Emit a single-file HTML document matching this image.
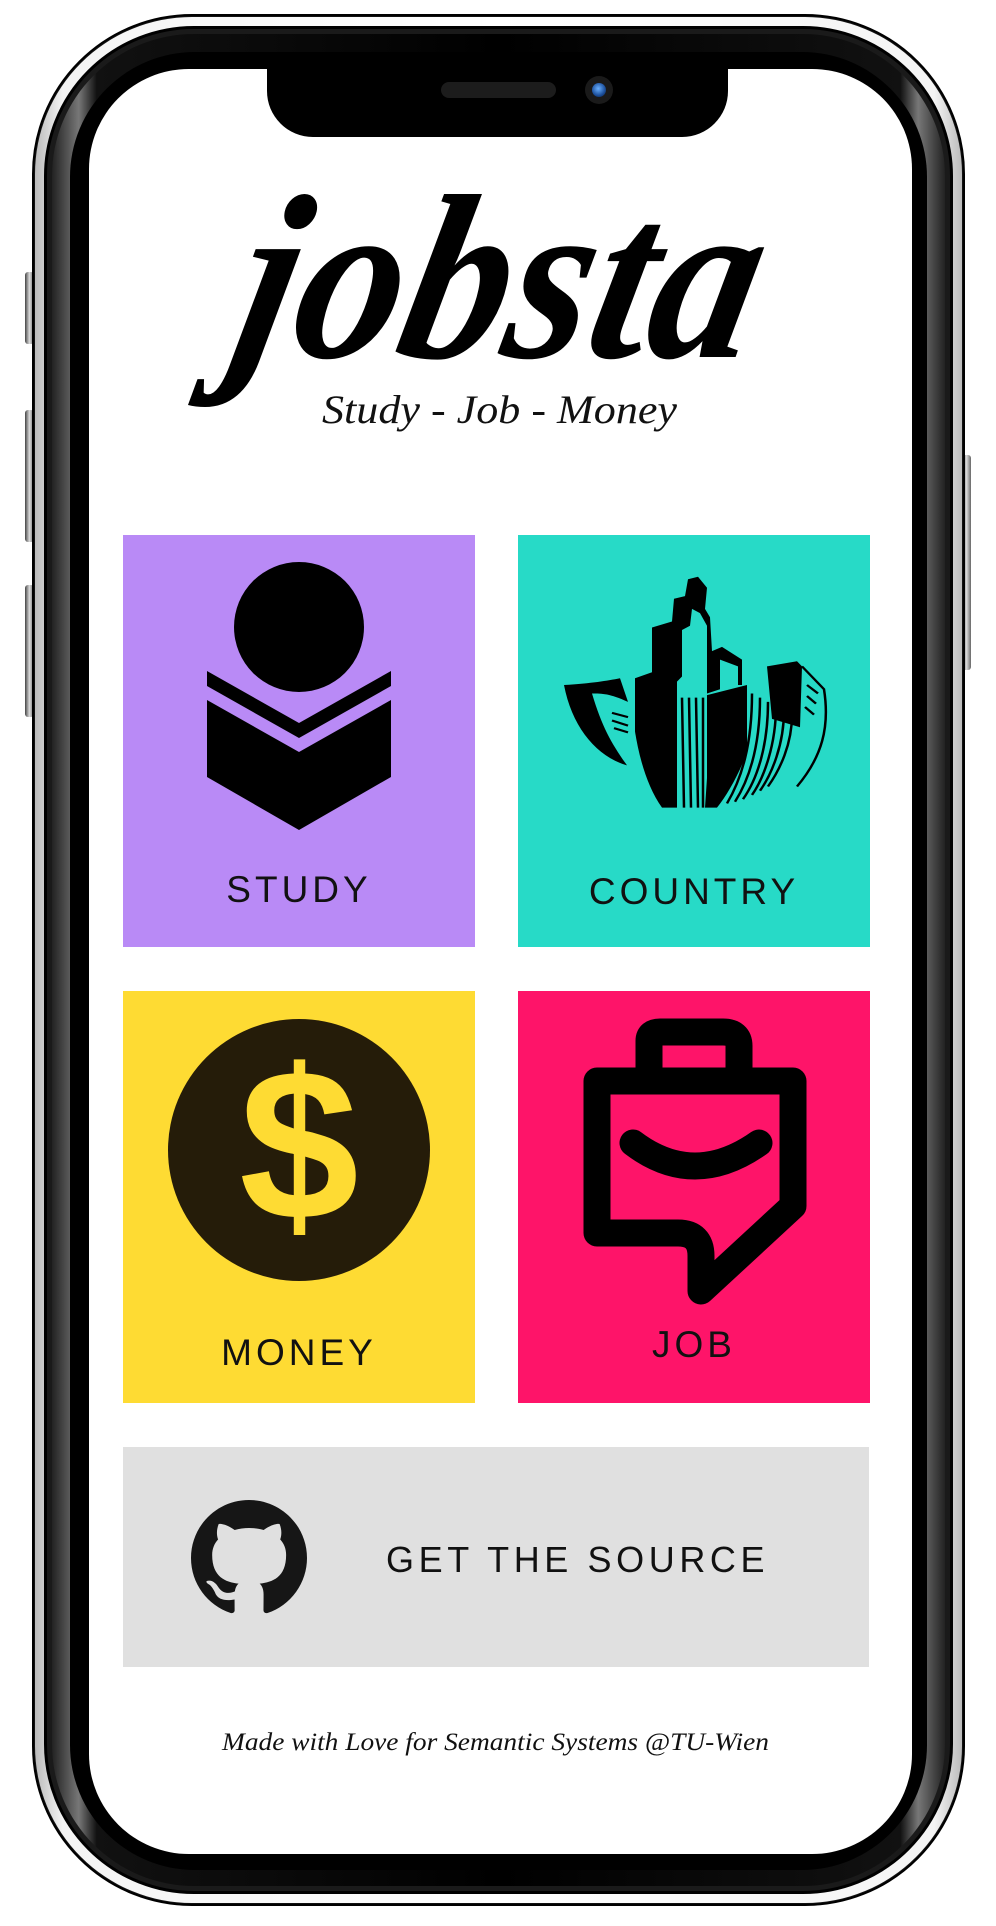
<!DOCTYPE html>
<html><head><meta charset="utf-8"><style>
*{margin:0;padding:0;box-sizing:border-box}
body{width:996px;height:1926px;background:#fff;position:relative;overflow:hidden;font-family:"Liberation Sans",sans-serif}
.abs{position:absolute}
.btn{position:absolute;background:linear-gradient(90deg,#444,#ddd,#666);border-radius:3px}
.card{position:absolute}
.lbl{position:absolute;left:0;right:0;text-align:center;font-size:37px;letter-spacing:4px;color:#111}
</style></head><body>
<div class="btn" style="left:25px;top:272px;width:9px;height:72px"></div>
<div class="btn" style="left:25px;top:410px;width:9px;height:132px"></div>
<div class="btn" style="left:25px;top:585px;width:9px;height:132px"></div>
<div class="btn" style="left:962px;top:455px;width:9px;height:215px"></div>
<div class="abs" style="left:32px;top:14px;width:933px;height:1892px;border-radius:160px;background:#111;border:2px solid #000"></div>
<div class="abs" style="left:35px;top:17px;width:927px;height:1886px;border-radius:157px;background:linear-gradient(90deg,#bbb,#f4f4f4 3%,#fff 50%,#f4f4f4 97%,#bbb)"></div>
<div class="abs" style="left:44px;top:26px;width:909px;height:1868px;border-radius:150px;background:#1a1a1a;border:3px solid #000"></div>
<div class="abs" style="left:52px;top:34px;width:893px;height:1852px;border-radius:142px;background:linear-gradient(90deg,#222,#777 3%,#111 5%,#000 50%,#111 95%,#777 97%,#222)"></div>
<div class="abs" style="left:70px;top:52px;width:857px;height:1818px;border-radius:125px;background:#000"></div>
<div class="abs" style="left:89px;top:69px;width:823px;height:1785px;border-radius:100px;background:#fff;overflow:hidden">
  <div class="abs" style="left:178px;top:-2px;width:461px;height:70px;background:#000;border-radius:0 0 46px 46px"></div>
</div>
<div class="abs" style="left:441px;top:82px;width:115px;height:16px;border-radius:8px;background:#1c1c1c"></div>
<div class="abs" style="left:585px;top:76px;width:28px;height:28px;border-radius:50%;background:#1a1a1a"></div>
<div class="abs" style="left:592px;top:83px;width:14px;height:14px;border-radius:50%;background:radial-gradient(circle at 45% 40%,#6ab0ff,#1b4e9a 60%,#0a1a33)"></div>

<svg class="abs" style="left:0;top:0" width="996" height="460">
  <g transform="translate(226,357) skewX(-12)">
  <text x="0" y="0" textLength="520" lengthAdjust="spacingAndGlyphs" font-family="Liberation Serif" font-style="italic" font-weight="bold" font-size="235" fill="#000">jobsta</text>
  </g>
  <text x="322" y="423" textLength="355" lengthAdjust="spacingAndGlyphs" font-family="Liberation Serif" font-style="italic" font-size="40" fill="#111">Study - Job - Money</text>
</svg>

<div class="card" style="left:123px;top:535px;width:352px;height:412px;background:#b98af6">
  <svg class="abs" style="left:0;top:0" width="352" height="412">
    <circle cx="176" cy="92" r="65" fill="#000"/>
    <polygon points="84,136 176,188 268,136 268,151 176,203 84,151" fill="#000"/>
    <polygon points="84,165 176,217 268,165 268,242 176,295 84,242" fill="#000"/>
  </svg>
  <div class="lbl" style="top:334px">STUDY</div>
</div>
<div class="card" style="left:518px;top:535px;width:352px;height:412px;background:#27dac7">
  <svg class="abs" style="left:-16px;top:0" width="368" height="412">
   <g transform="translate(0,40) scale(1,0.846)">
    <g fill="#000">
      <path d="M62,130 C90,128 105,125 118,122 L126,150 C108,140 100,140 90,140 C100,180 110,200 125,225 C95,215 70,180 62,130Z"/>
      <path d="M133,122 L150,115 L150,62 L170,55 L172,28 L183,25 L186,5 L196,2 L205,15 L203,40 L208,50 L210,90 L220,85 L240,100 L240,130 L236,130 L236,108 L218,100 L218,135 L205,140 L205,60 L198,45 L190,40 L188,60 L180,65 L180,120 L175,126 L175,275 L160,275 C145,250 137,215 133,185Z"/>
      <path d="M205,142 L245,130 L245,210 C235,240 225,260 215,275 L203,275 L205,240Z"/>
      <path d="M265,108 L295,102 L300,108 L298,180 L270,170Z"/>
    </g>
    <g fill="none" stroke="#000" stroke-width="2.5">
      <path d="M180,145 L182,275 M187,145 L189,275 M194,145 L196,275 M201,145 L201,275"/>
      <path d="M250,140 C250,200 240,240 225,270 M258,145 C258,200 248,240 233,268 M266,150 C266,200 256,240 241,265 M274,155 C274,200 262,240 250,260 M282,160 C282,200 270,235 258,255 M290,165 C290,200 278,230 266,250"/>
      <path d="M300,108 L322,135 C328,180 320,215 295,250"/>
      <path d="M305,130 L316,140 M305,143 L314,152 M303,156 L312,165"/>
      <path d="M110,163 L126,168 M110,172 L126,178 M112,181 L126,186"/>
    </g>
   </g>
  </svg>
  <div class="lbl" style="top:336px">COUNTRY</div>
</div>
<div class="card" style="left:123px;top:991px;width:352px;height:412px;background:#fedb33">
  <svg class="abs" style="left:0;top:0" width="352" height="412">
    <circle cx="176" cy="159" r="131" fill="#251c09"/>
    <text x="176" y="228" text-anchor="middle" font-family="Liberation Sans" font-weight="bold" font-size="215" fill="#fedb33">$</text>
  </svg>
  <div class="lbl" style="top:341px">MONEY</div>
</div>
<div class="card" style="left:518px;top:991px;width:352px;height:412px;background:#fe1469">
  <svg class="abs" style="left:0;top:0" width="352" height="412">
    <g fill="none" stroke="#000" stroke-width="27" stroke-linecap="round" stroke-linejoin="round">
      <path d="M131,78 L131,50 Q131,41 142,41 L205,41 Q221,41 221,55 L221,78"/>
      <path d="M79,90 L275,90 L275,215 L183,300 L183,265 Q183,242 160,242 L79,242 Z"/>
      <path d="M115,152 Q176,198 241,152"/>
    </g>
  </svg>
  <div class="lbl" style="top:333px">JOB</div>
</div>
<div class="card" style="left:123px;top:1447px;width:746px;height:220px;background:#e0e0e0">
  <svg class="abs" style="left:68px;top:53px" width="116" height="116" viewBox="0 0 16 16">
    <path fill="#161616" d="M8 0C3.58 0 0 3.58 0 8c0 3.540 2.29 6.53 5.47 7.59.4.07.55-.17.55-.38 0-.19-.01-.82-.01-1.490-2.01.37-2.53-.49-2.69-.94-.09-.23-.48-.94-.82-1.130-.28-.15-.68-.52-.01-.53.63-.01 1.08.58 1.23.82.72 1.21 1.87.87 2.33.66.07-.52.28-.87.51-1.070-1.780-.2-3.64-.89-3.64-3.950 0-.87.31-1.59.82-2.150-.08-.2-.36-1.02.08-2.12 0 0 .67-.21 2.2.82.64-.18 1.32-.27 2-.27.68 0 1.360.09 2 .27 1.53-1.04 2.2-.82 2.2-.82.44 1.1.16 1.92.08 2.12.51.56.82 1.27.82 2.15 0 3.07-1.87 3.75-3.65 3.95.29.25.54.73.54 1.48 0 1.07-.01 1.93-.01 2.2 0 .21.15.46.55.38A8.013 8.013 0 0016 8c0-4.42-3.58-8-8-8z"/>
  </svg>
  <div class="abs" style="left:263px;top:92px;font-size:36px;letter-spacing:4.6px;color:#111;white-space:nowrap">GET THE SOURCE</div>
</div>
<svg class="abs" style="left:0;top:1720px" width="996" height="40">
  <text x="222" y="30" textLength="547" lengthAdjust="spacingAndGlyphs" font-family="Liberation Serif" font-style="italic" font-size="25" fill="#111">Made with Love for Semantic Systems @TU-Wien</text>
</svg>
</body></html>
